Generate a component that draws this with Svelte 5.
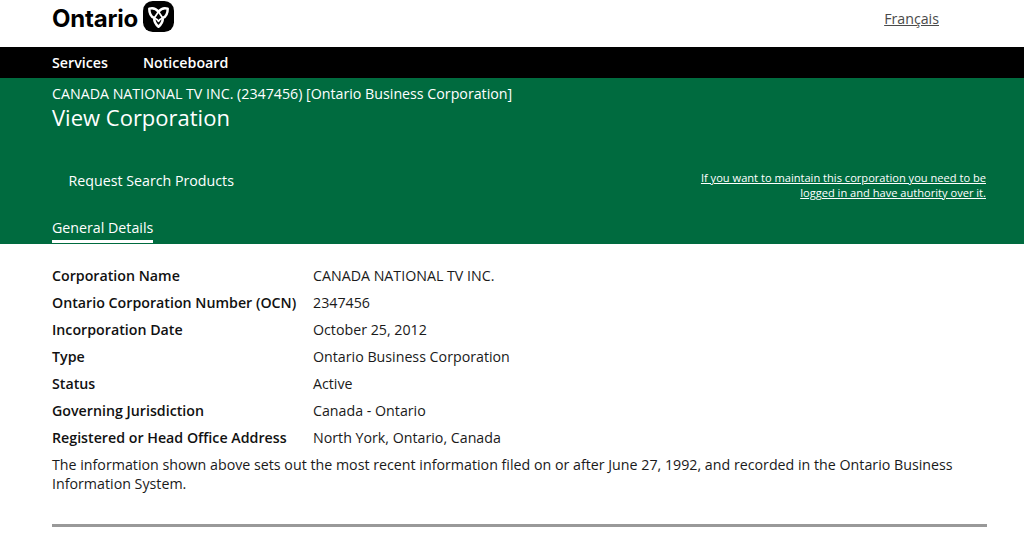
<script>
	const details = [
		['Corporation Name', 'CANADA NATIONAL TV INC.'],
		['Ontario Corporation Number (OCN)', '2347456'],
		['Incorporation Date', 'October 25, 2012'],
		['Type', 'Ontario Business Corporation'],
		['Status', 'Active'],
		['Governing Jurisdiction', 'Canada - Ontario'],
		['Registered or Head Office Address', 'North York, Ontario, Canada']
	];
</script>

<header class="top">
	<div class="brand">
		<span class="wordmark">Ontario</span>
		<svg class="trillium" viewBox="0 0 32 32" aria-hidden="true">
			<rect width="32" height="32" rx="10" fill="#000" />
			<path
				d="M16 11C13 7.500 9.500 7 6.500 8C6.500 12.500 8 16 11.500 17.500C11.500 21 13 24 16 26.500C19 24 20.500 21 20.500 17.500C24 16 25.500 12.500 25.500 8C22.500 7 19 7.500 16 11Z"
				fill="none"
				stroke="#fff"
				stroke-width="2.600"
				stroke-linejoin="round"
			/>
			<path
				d="M16 11C17.500 13 18.500 15 20.500 17.500C18.500 18.500 17 19 16 21C15 19 13.500 18.500 11.500 17.500C13.500 15 14.500 13 16 11Z"
				fill="none"
				stroke="#fff"
				stroke-width="1.800"
				stroke-linejoin="round"
			/>
		</svg>
	</div>
	<a class="lang" href="#fr">Français</a>
</header>

<nav class="mainnav">
	<a href="#services">Services</a>
	<a href="#noticeboard">Noticeboard</a>
</nav>

<section class="banner">
	<p class="entity">CANADA NATIONAL TV INC. (2347456) [Ontario Business Corporation]</p>
	<h1>View Corporation</h1>
	<div class="actions">
		<a class="request" href="#request">Request Search Products</a>
		<a class="maintain" href="#maintain">If you want to maintain this corporation you need to be logged in and have authority over it.</a>
	</div>
	<div class="tabs">
		<span class="tab">General Details</span>
	</div>
</section>

<main class="content">
	<dl>
		{#each details as [label, value]}
			<div class="row">
				<dt>{label}</dt>
				<dd>{value}</dd>
			</div>
		{/each}
	</dl>
	<p class="note">The information shown above sets out the most recent information filed on or after June 27, 1992, and recorded in the Ontario Business Information System.</p>
	<hr />
</main>

<style>
	:global(body) {
		margin: 0;
		background: #fff;
		font-family: 'Open Sans', 'Noto Sans', sans-serif;
		color: #1a1a1a;
	}

	a {
		color: inherit;
	}

	.top {
		height: 47px;
		padding: 0 85px 0 52px;
		display: flex;
		justify-content: space-between;
		align-items: flex-start;
		box-sizing: border-box;
	}

	.brand {
		display: flex;
		align-items: flex-start;
		gap: 5px;
		padding-top: 1px;
	}

	.wordmark {
		font-family: Inter, 'Open Sans', sans-serif;
		font-size: 24px;
		font-weight: 700;
		letter-spacing: -0.2px;
		line-height: 36px;
		color: #000;
	}

	.trillium {
		width: 31px;
		height: 31px;
	}

	.lang {
		font-size: 14.22px;
		line-height: 19px;
		margin-top: 9px;
		color: #4a4a4a;
	}

	.mainnav {
		height: 31px;
		background: #000;
		display: flex;
		gap: 35px;
		padding: 0 52px;
		align-items: center;
	}

	.mainnav a {
		color: #fff;
		font-size: 14.22px;
		font-weight: 600;
		text-decoration: none;
	}

	.banner {
		background: #006b3f;
		color: #fff;
		height: 166px;
		box-sizing: border-box;
		padding: 6px 37px 0 52px;
		display: flex;
		flex-direction: column;
	}

	.entity {
		margin: 0;
		font-size: 14.22px;
		line-height: 19px;
	}

	h1 {
		margin: 0;
		font-size: 22px;
		font-weight: 400;
		line-height: 29px;
	}

	.actions {
		display: flex;
		justify-content: space-between;
		align-items: flex-start;
		margin-top: 39px;
	}

	.request {
		margin: 0 0 0 16.5px;
		font-size: 14.22px;
		line-height: 19px;
		text-decoration: none;
	}

	.maintain {
		width: 290px;
		margin: -1px 1px 0 0;
		text-align: right;
		font-size: 11.1px;
		line-height: 15px;
	}

	.tabs {
		margin-top: auto;
		display: flex;
	}

	.tab {
		font-size: 14.22px;
		line-height: 19px;
		padding-bottom: 3px;
		border-bottom: 3px solid #fff;
		margin-bottom: 1px;
	}

	.content {
		padding: 18px 37px 0 52px;
	}

	dl {
		margin: 0;
	}

	.row {
		display: grid;
		grid-template-columns: 261px 1fr;
		height: 27px;
		align-items: center;
		font-size: 14.22px;
	}

	dt {
		font-weight: 600;
		color: #111;
	}

	dd {
		margin: 0;
	}

	.note {
		margin: 4px 0 0;
		font-size: 14.24px;
		line-height: 19px;
	}

	hr {
		margin: 31px 0 0;
		border: 0;
		height: 3px;
		background: #999;
	}
</style>
